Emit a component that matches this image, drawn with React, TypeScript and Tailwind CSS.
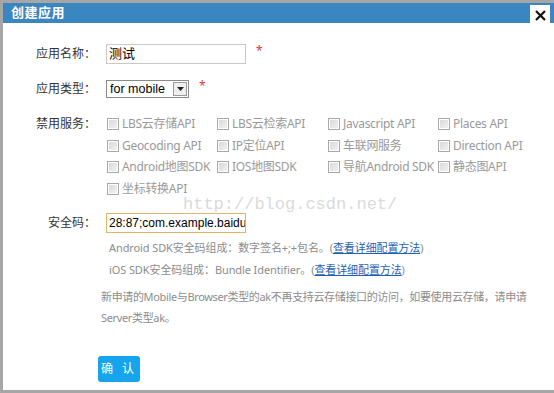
const SERVICES = [
  "LBS云存储API",
  "LBS云检索API",
  "Javascript API",
  "Places API",
  "Geocoding API",
  "IP定位API",
  "车联网服务",
  "Direction API",
  "Android地图SDK",
  "IOS地图SDK",
  "导航Android SDK",
  "静态图API",
  "坐标转换API",
];

const CJK = "font-['Noto_Sans','Noto_Sans_CJK_SC',sans-serif]";

function Label({ text }: { text: string }) {
  return (
    <div className="w-[93px] shrink-0 text-right text-[12px] text-[#333]">{text}</div>
  );
}

function Box() {
  return (
    <span className="w-[12px] h-[12px] shrink-0 border border-[#a8a8a8] bg-gradient-to-br from-[#d6d6d6] to-[#f4f4f4] shadow-[inset_0_0_0_1px_#fff]" />
  );
}

export default function App() {
  return (
    <div
      className={`relative w-[554px] h-[393px] overflow-hidden bg-white border-t-[3px] border-l-[3px] border-b-[3px] border-[#a6a6a6] ${CJK}`}
    >
      {/* Title bar */}
      <div className="h-[20px] bg-[#3a86c0] flex items-center pl-[8px]">
        <span className="text-white text-[13px] font-bold tracking-[0.5px]">创建应用</span>
      </div>
      <div className="absolute right-[4px] top-[2px] w-[20px] h-[20px] bg-white flex items-center justify-center">
        <svg width="13" height="13" viewBox="0 0 13 13" aria-hidden="true">
          <path d="M2 2L11 11M11 2L2 11" stroke="#111" strokeWidth="2.2" />
        </svg>
      </div>

      {/* Watermark */}
      <div className="absolute left-[180px] top-[192px] leading-[20px] text-[17px] text-[#dadada] font-['Liberation_Mono',monospace]">
        http://blog.csdn.net/
      </div>

      <div className="relative pt-[21px]">
        {/* name */}
        <div className="flex items-center h-[20px]">
          <Label text="应用名称：" />
          <div className="ml-[10px] w-[140px] h-[20px] border border-[#c8c8c8] flex items-center px-[2px] text-[13px] text-black">
            测试
          </div>
          <span className="ml-[10px] text-[#e33] text-[12px] -mt-[6px]">*</span>
        </div>

        {/* type */}
        <div className="flex items-center h-[18px] mt-[16px]">
          <Label text="应用类型：" />
          <div className="ml-[10px] w-[83px] h-[18px] border border-[#8a8a8a] bg-white flex items-center justify-between pl-[3px] pr-[1px] text-[12.5px] text-black font-['Liberation_Sans',sans-serif]">
            <span>for mobile</span>
            <span className="w-[14px] h-[14px] border border-[#9a9a9a] bg-[#eee] flex items-center justify-center">
              <svg width="7" height="4" viewBox="0 0 7 4" aria-hidden="true">
                <path d="M0 0H7L3.5 4Z" fill="#222" />
              </svg>
            </span>
          </div>
          <span className="ml-[10px] text-[#e33] text-[12px] -mt-[6px]">*</span>
        </div>

        {/* services */}
        <div className="flex mt-[15px]">
          <div className="h-[22px] flex items-center">
            <Label text="禁用服务：" />
          </div>
          <div className="ml-[11px] grid grid-cols-[110px_111px_110px_110px]">
            {SERVICES.map((s) => (
              <div key={s} className="h-[21.7px] flex items-center gap-[3px] text-[12px] tracking-[-0.3px] text-[#9a9a9a] whitespace-nowrap">
                <Box />
                <span>{s}</span>
              </div>
            ))}
          </div>
        </div>

        {/* key */}
        <div className="flex items-center h-[20px] mt-[13px]">
          <Label text="安全码：" />
          <div className="ml-[10px] w-[140px] h-[20px] border border-[#e2b664] bg-white flex items-center pl-[2px] text-[12px] text-black font-['Liberation_Sans',sans-serif] whitespace-nowrap overflow-hidden">
            28:87;com.example.baidu<span className="w-[1px] h-[14px] bg-black" />
          </div>
        </div>

        <div className="pl-[106px] mt-[4px] text-[11px] tracking-[-0.1px] text-[#8c8c8c] leading-[22px] whitespace-nowrap">
          <div>
            Android SDK安全码组成：数字签名+;+包名。(
            <span className="text-[#1f5fb8] underline">查看详细配置方法</span>)
          </div>
          <div>
            iOS SDK安全码组成：Bundle Identifier。(
            <span className="text-[#1f5fb8] underline">查看详细配置方法</span>)
          </div>
        </div>
        <div className="pl-[98px] mt-[5px] text-[11px] tracking-[-0.35px] text-[#8c8c8c] leading-[21px] pr-[12px]">
          新申请的Mobile与Browser类型的ak不再支持云存储接口的访问，如要使用云存储，请申请Server类型ak。
        </div>

        <div className="pl-[95px] mt-[27px]">
          <button className="w-[42px] h-[26px] rounded-[3px] bg-[#16a4ec] text-white text-[12px] tracking-[3px]">
            确 认
          </button>
        </div>
      </div>
    </div>
  );
}
